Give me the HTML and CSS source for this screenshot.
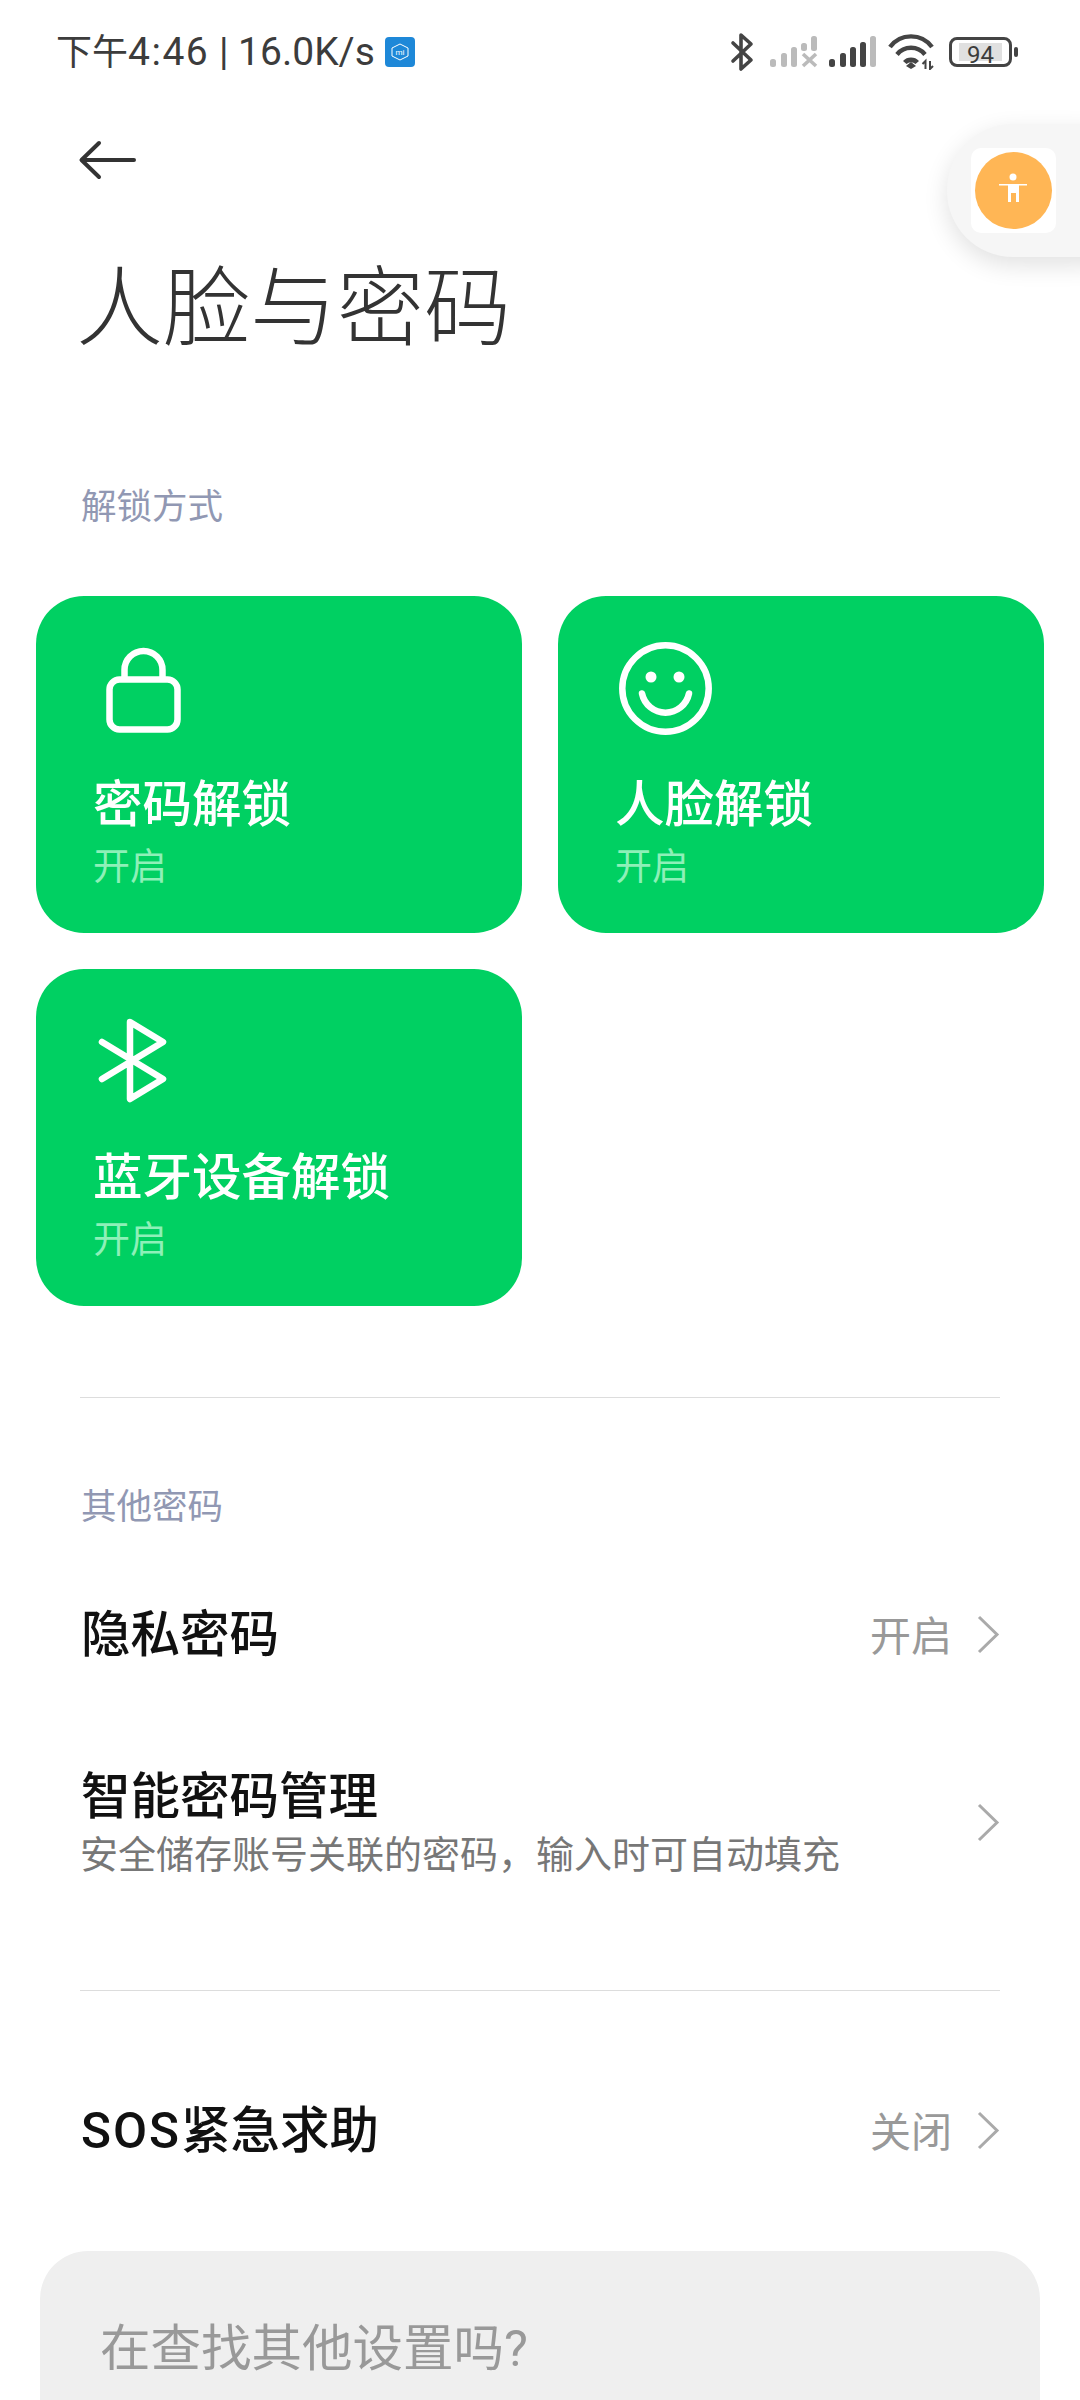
FILE: index.html
```html
<!DOCTYPE html>
<html lang="zh-CN">

<head>
  <meta charset="UTF-8">
  <meta name="viewport" content="width=device-width, initial-scale=1.0">
  <title>人脸与密码</title>
  <link rel="stylesheet" href="styles.css">
</head>

<body>
  <div class="page">

    <!-- Status bar -->
    <div class="status">
      <div class="status-left">
        <span class="status-text">下午<span class="status-latin"><span class="status-time">4:46</span> | 16.0K/s</span></span>
        <div class="mi-badge">
          <svg width="30" height="30" viewBox="0 0 30 30">
            <path d="M15 7 L23 11 V19 L15 23 L7 19 V11 Z" fill="none" stroke="#fff" stroke-width="1"/>
            <text x="15" y="18" class="mi-text">mi</text>
          </svg>
        </div>
      </div>
      <div class="status-right">
        <svg class="st-bt" width="24" height="40" viewBox="0 0 24 40">
          <path d="M3 11 L21 28 L11 37 V3 L21 12 L3 29" fill="none" stroke="#444" stroke-width="3.6" stroke-linejoin="round" stroke-linecap="round"/>
        </svg>
        <svg class="st-sig" width="48" height="32" viewBox="0 0 48 32">
          <g fill="#bbb">
            <rect x="0" y="23" width="6" height="8" rx="2.5"/>
            <rect x="11" y="17" width="6" height="14" rx="2.5"/>
            <rect x="21" y="11" width="6" height="20" rx="2.5"/>
            <rect x="31" y="7" width="6" height="8" rx="2.5"/>
            <rect x="41" y="0" width="6" height="15" rx="2.5"/>
          </g>
          <path d="M33 18 L46 30 M46 18 L33 30" stroke="#bbb" stroke-width="3.6"/>
        </svg>
        <svg class="st-sig2" width="48" height="32" viewBox="0 0 48 32">
          <g fill="#444">
            <rect x="0" y="23" width="6" height="8" rx="2.5"/>
            <rect x="11" y="17" width="6" height="14" rx="2.5"/>
            <rect x="21" y="11" width="6" height="20" rx="2.5"/>
            <rect x="31" y="6" width="6" height="25" rx="2.5"/>
          </g>
          <rect x="41" y="0" width="6" height="31" rx="2.5" fill="#bbb"/>
        </svg>
        <svg class="st-wifi" width="48" height="36" viewBox="0 0 48 36">
          <g fill="none" stroke="#444" stroke-width="4.4">
            <path d="M2 13 A26 26 0 0 1 44 13"/>
            <path d="M9 20.500 A18 18 0 0 1 37 20.500"/>
          </g>
          <path d="M15 27 A11 11 0 0 1 31 27 L27.500 30 A6.500 6.500 0 0 0 18.500 30 Z" fill="#444"/>
          <path d="M23 28 L28 32 L23 35 L18 32 Z" fill="#444"/>
          <rect x="33" y="25" width="15" height="11" fill="#fff"/>
          <path d="M37.500 35 V27 L34.500 30 M42 27 V35 L45 32" fill="none" stroke="#444" stroke-width="2"/>
        </svg>
        <div class="battery">
          <div class="battery-box">
            <div class="battery-level">94</div>
          </div>
          <div class="battery-nub"></div>
        </div>
      </div>
    </div>

    <!-- Floating accessibility button -->
    <div class="float-pill">
      <div class="float-tile">
        <div class="float-circle">
          <svg width="77" height="77" viewBox="0 0 77 77">
            <circle cx="38" cy="25" r="3.500" fill="#fff"/>
            <path d="M24 32 H52 V33.600 H44 V50 H41 V41 H36 V50 H33 V33.600 H24 Z" fill="#fff"/>
          </svg>
        </div>
      </div>
    </div>

    <div class="nav">
      <svg width="60" height="44" viewBox="0 0 60 44">
        <path d="M56 22 H4 M21 5 L3.500 22 L21 39" fill="none" stroke="#333" stroke-width="4" stroke-linecap="round" stroke-linejoin="round"/>
      </svg>
    </div>

    <h1 class="page-title">人脸与密码</h1>

    <div class="section-label">解锁方式</div>

    <div class="card-grid">
      <div class="card">
        <svg class="card-icon" width="100" height="100" viewBox="0 0 100 100">
          <rect x="14.500" y="43.500" width="68" height="50" rx="10" fill="none" stroke="#fff" stroke-width="6.500"/>
          <path d="M29.500 42 V34 A19 19 0 0 1 67.500 34 V42" fill="none" stroke="#fff" stroke-width="6.500"/>
        </svg>
        <div class="card-title">密码解锁</div>
        <div class="card-sub">开启</div>
      </div>
      <div class="card">
        <svg class="card-icon" width="100" height="100" viewBox="0 0 100 100">
          <circle cx="48.500" cy="52.500" r="43.200" fill="none" stroke="#fff" stroke-width="6.500"/>
          <circle cx="34" cy="41" r="5.500" fill="#fff"/>
          <circle cx="62" cy="41" r="5.500" fill="#fff"/>
          <path d="M25 57.500 A24 24 0 0 0 72 57.500" fill="none" stroke="#fff" stroke-width="6.500" stroke-linecap="round"/>
        </svg>
        <div class="card-title">人脸解锁</div>
        <div class="card-sub">开启</div>
      </div>
      <div class="card">
        <svg class="card-icon" width="100" height="100" viewBox="0 0 100 100">
          <path d="M7 33 L68 70 L35 90 V13 L68 33 L7 70" fill="none" stroke="#fff" stroke-width="6.500" stroke-linejoin="round" stroke-linecap="round"/>
        </svg>
        <div class="card-title">蓝牙设备解锁</div>
        <div class="card-sub">开启</div>
      </div>
    </div>

    <div class="divider divider-first"></div>

    <div class="section-label section-label-other">其他密码</div>

    <div class="rows">
      <div class="row row-single">
        <div class="row-main">
          <div class="row-title">隐私密码</div>
        </div>
        <span class="row-value">开启</span>
        <svg class="chevron" width="24" height="40" viewBox="0 0 24 40">
          <path d="M3 3 L21 20.500 L3 38" fill="none" stroke="#aaa" stroke-width="3"/>
        </svg>
      </div>
      <div class="row row-double">
        <div class="row-main">
          <div class="row-title">智能密码管理</div>
          <div class="row-desc">安全储存账号关联的密码，输入时可自动填充</div>
        </div>
        <svg class="chevron" width="24" height="40" viewBox="0 0 24 40">
          <path d="M3 3 L21 20.500 L3 38" fill="none" stroke="#aaa" stroke-width="3"/>
        </svg>
      </div>
    </div>

    <div class="divider divider-second"></div>

    <div class="row row-single row-sos">
      <div class="row-main">
        <div class="row-title"><span class="row-latin">SOS</span>紧急求助</div>
      </div>
      <span class="row-value">关闭</span>
      <svg class="chevron" width="24" height="40" viewBox="0 0 24 40">
        <path d="M3 3 L21 20.500 L3 38" fill="none" stroke="#aaa" stroke-width="3"/>
      </svg>
    </div>

    <div class="help-card">
      <div class="help-text">在查找其他设置吗?</div>
    </div>

  </div>
</body>

</html>
```

FILE: styles.css
```css
body {
  margin: 0;
  background: #fff;
  font-family: Roboto, "Noto Sans CJK SC", sans-serif;
}

.page {
  position: relative;
  width: 1080px;
  height: 2400px;
  overflow: hidden;
}

/* Status bar */
.status {
  display: flex;
  justify-content: space-between;
  align-items: center;
  height: 104px;
  padding: 0 62px 0 56px;
  box-sizing: border-box;
}

.status-left {
  display: flex;
  align-items: center;
  gap: 10px;
}

.status-text {
  font-size: 36px;
  line-height: 44px;
  color: #3c3c3c;
}

.status-latin {
  font-size: 39px;
}

.status-time {
  letter-spacing: 1.5px;
}

.mi-badge {
  display: flex;
  width: 30px;
  height: 30px;
  border-radius: 4px;
  background: #1e88d8;
}

.mi-text {
  font-size: 8px;
  fill: #fff;
  text-anchor: middle;
}

.status-right {
  display: flex;
  align-items: center;
}

.st-bt {
  margin-right: 16px;
}

.st-sig {
  margin-right: 11px;
}

.st-sig2 {
  margin-right: 11px;
}

.st-wifi {
  margin-right: 13px;
}

.battery {
  display: flex;
  align-items: center;
  gap: 2px;
}

.battery-box {
  display: flex;
  width: 63px;
  height: 30px;
  padding: 3px 7px;
  box-sizing: border-box;
  border: 3px solid #444;
  border-radius: 8px;
}

.battery-level {
  flex: 1;
  background: #e0e0e0;
  font-size: 24px;
  line-height: 24px;
  text-align: center;
  color: #3c3c3c;
}

.battery-nub {
  width: 4px;
  height: 10px;
  border-radius: 2px;
  background: #444;
}

/* Floating button over the page */
.float-pill {
  position: absolute;
  top: 124px;
  left: 947px;
  display: flex;
  width: 200px;
  height: 133px;
  padding: 24px 0 0 24px;
  box-sizing: border-box;
  border-radius: 66px;
  background: #f6f6f6;
  box-shadow: 0 8px 24px rgba(0, 0, 0, 0.12);
}

.float-tile {
  width: 85px;
  height: 85px;
  padding: 4px;
  box-sizing: border-box;
  border-radius: 10px;
  background: #fff;
}

.float-circle {
  width: 77px;
  height: 77px;
  border-radius: 50%;
  background: #ffb655;
}

/* Header */
.nav {
  display: flex;
  align-items: center;
  height: 112px;
  padding-left: 78px;
}

.page-title {
  margin: 43px 0 0 76px;
  font-size: 87px;
  line-height: 100px;
  font-weight: 300;
  color: #333;
}

.section-label {
  margin: 123px 0 0 81px;
  font-size: 35.500px;
  line-height: 50px;
  color: #9198b3;
}

.section-label-other {
  margin-top: 84px;
}

/* Unlock cards */
.card-grid {
  display: grid;
  grid-template-columns: 486px 486px;
  grid-auto-rows: 337px;
  gap: 36px;
  margin-top: 64px;
  padding-left: 36px;
}

.card {
  padding: 40px 0 0 57px;
  box-sizing: border-box;
  border-radius: 48px;
  background: #00d062;
}

.card-icon {
  display: block;
  margin-left: 2px;
}

.card-title {
  margin-top: 39px;
  font-size: 49.500px;
  line-height: 60px;
  font-weight: 500;
  color: #fff;
}

.card-sub {
  margin-top: 8px;
  font-size: 37px;
  line-height: 50px;
  color: #8ef0b8;
}

/* List rows */
.divider {
  height: 1px;
  margin: 0 80px 0 80px;
  background: #ddd;
}

.divider-first {
  margin-top: 91px;
}

.divider-second {
  margin-top: 59px;
}

.rows {
  margin-top: 23px;
}

.row {
  display: flex;
  align-items: center;
  padding: 0 80px 0 81px;
}

.row-single {
  height: 160px;
}

.row-double {
  height: 216px;
}

.row-sos {
  margin-top: 60px;
}

.row-main {
  flex: 1;
}

.row-title {
  font-size: 49.500px;
  line-height: 62px;
  font-weight: 500;
  color: #111;
}

.row-latin {
  letter-spacing: 2px;
}

.row-desc {
  margin: 2px 0 0 -1px;
  font-size: 38px;
  line-height: 50px;
  color: #777;
}

.row-value {
  margin: 0 24px 4px 0;
  font-size: 41px;
  color: #999;
}

.chevron {
  margin-bottom: 2px;
}

.help-card {
  height: 200px;
  margin: 40px 40px 0;
  padding: 63px 0 0 60px;
  box-sizing: border-box;
  border-radius: 48px;
  background: #efefef;
}

.help-text {
  font-size: 50.500px;
  line-height: 70px;
  color: #999;
}
```
